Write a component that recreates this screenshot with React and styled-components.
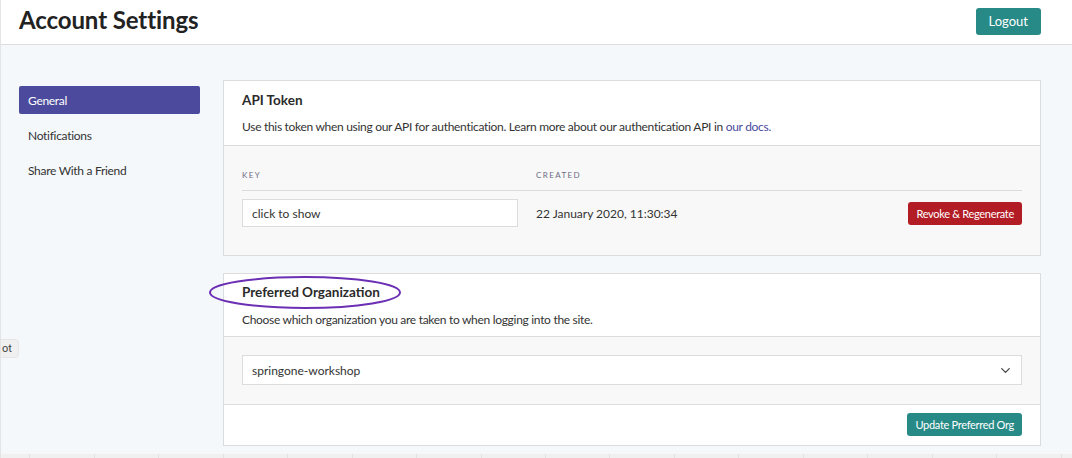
import React from 'react'
import styled, { createGlobalStyle } from 'styled-components'
import { ChevronDown } from 'lucide-react'

const GlobalStyle = createGlobalStyle`
  html, body {
    margin: 0;
    padding: 0;
    background: #fff;
    font-family: 'Lato', 'Open Sans', sans-serif;
    color: #333;
  }
  * { box-sizing: border-box; }
`

const Page = styled.div`
  width: 1072px;
  height: 458px;
  display: flex;
  flex-direction: column;
  position: relative;
  overflow: hidden;
  border-left: 1px solid #e4e4e4;
`

const Header = styled.header`
  height: 45px;
  flex: none;
  display: flex;
  align-items: center;
  justify-content: space-between;
  padding: 0 31px 0 18px;
  background: #fff;
  border-bottom: 1px solid #dedede;
`

const Title = styled.h1`
  margin: 0;
  font-size: 24px;
  font-weight: 700;
  color: #222;
  letter-spacing: -0.1px;
  position: relative;
  top: -3px;
`

const Button = styled.button`
  border: none;
  border-radius: 3px;
  color: #fff;
  font-family: inherit;
  font-size: ${p => p.size || 11}px;
  letter-spacing: ${p => (p.size ? 0 : -0.3)}px;
  padding: 0 ${p => p.pad || 8}px;
  height: ${p => p.h || 23}px;
  background: ${p => (p.danger ? '#b21c25' : '#278a87')};
  cursor: pointer;
  position: relative;
  top: ${p => p.lift || 0}px;
`

const Body = styled.main`
  flex: 1;
  display: flex;
  background: #f5f8fb;
  padding: 35px 31px 0 18px;
  gap: 23px;
`

const Sidebar = styled.nav`
  width: 181px;
  flex: none;
  display: flex;
  flex-direction: column;
  padding-top: 6px;
`

const NavItem = styled.div`
  height: 28px;
  display: flex;
  align-items: center;
  padding-left: 9px;
  margin-bottom: 7px;
  font-size: 12px;
  letter-spacing: -0.3px;
  border-radius: 2px;
  color: ${p => (p.active ? '#fff' : '#333')};
  background: ${p => (p.active ? '#4b4a9c' : 'transparent')};
`

const Content = styled.div`
  flex: 1;
  display: flex;
  flex-direction: column;
  gap: 17px;
`

const Card = styled.section`
  background: #fff;
  border: 1px solid #dcdcdc;
  position: relative;
`

const CardHead = styled.div`
  padding: ${p => (p.tight ? '10px 18px 9px' : '11px 18px 11px')};
  border-bottom: 1px solid #dcdcdc;
`

const CardTitle = styled.h2`
  margin: 0 0 ${p => (p.tight ? 12 : 11)}px;
  font-size: 13.5px;
  font-weight: 700;
  color: #2a2a2a;
`

const Desc = styled.p`
  margin: 0;
  font-size: 12px;
  letter-spacing: -0.3px;
  color: #333;
  a { color: #4b4a9c; text-decoration: none; }
`

const CardBody = styled.div`
  background: #f8f8f8;
  padding: ${p => p.pad || '20px 18px 28px'};
  border-bottom: ${p => (p.divided ? '1px solid #dcdcdc' : 'none')};
`

const Grid = styled.div`
  display: grid;
  grid-template-columns: 294px 1fr auto;
  align-items: center;
`

const Label = styled.div`
  font-size: 8px;
  letter-spacing: 1.4px;
  color: #6b6b85;
  padding: 4px 0 10px;
  border-bottom: 1px solid #dcdcdc;
`

const Cell = styled.div`
  padding-top: 8px;
  font-size: 12px;
  color: #333;
  justify-self: ${p => (p.end ? 'end' : 'stretch')};
`

const Input = styled.div`
  width: 276px;
  height: 28px;
  border: 1px solid #dcdcdc;
  background: #fff;
  display: flex;
  align-items: center;
  padding-left: 9px;
  font-size: 12px;
  color: #333;
`

const Select = styled(Input)`
  width: 100%;
  height: 30px;
  justify-content: space-between;
  padding-right: 8px;
  svg { color: #444; }
`

const CardFoot = styled.div`
  display: flex;
  justify-content: flex-end;
  padding: 8px 18px 9px;
`

const Ellipse = styled.svg`
  position: absolute;
  left: -15px;
  top: 2px;
  overflow: visible;
  pointer-events: none;
`

const Tip = styled.div`
  position: absolute;
  left: -5px;
  top: 339px;
  height: 19px;
  padding: 0 6px 0 5px;
  display: flex;
  align-items: center;
  background: #f0f0f0;
  border: 1px solid #e6e6e6;
  border-radius: 4px;
  font-family: 'Roboto', sans-serif;
  font-size: 11px;
  color: #444;
`

const Strip = styled.div`
  height: 4px;
  flex: none;
  background: repeating-linear-gradient(90deg, #f0f0f0 0 28px, #e2e2e2 28px 29px, #f0f0f0 29px 64.5px);
`

export default function App() {
  return (
    <>
      <GlobalStyle />
      <Page>
        <Header>
          <Title>Account Settings</Title>
          <Button size={13} h={27} pad={13} lift={-1}>Logout</Button>
        </Header>
        <Body>
          <Sidebar>
            <NavItem active>General</NavItem>
            <NavItem>Notifications</NavItem>
            <NavItem>Share With a Friend</NavItem>
          </Sidebar>
          <Content>
            <Card>
              <CardHead>
                <CardTitle>API Token</CardTitle>
                <Desc>
                  Use this token when using our API for authentication. Learn more about our authentication API in <a href="#">our docs.</a>
                </Desc>
              </CardHead>
              <CardBody>
                <Grid>
                  <Label>KEY</Label>
                  <Label>CREATED</Label>
                  <Label>&nbsp;</Label>
                  <Cell><Input>click to show</Input></Cell>
                  <Cell>22 January 2020, 11:30:34</Cell>
                  <Cell end="1"><Button danger>Revoke &amp; Regenerate</Button></Cell>
                </Grid>
              </CardBody>
            </Card>
            <Card>
              <CardHead tight>
                <CardTitle tight>Preferred Organization</CardTitle>
                <Desc>Choose which organization you are taken to when logging into the site.</Desc>
              </CardHead>
              <CardBody pad="18px 18px 19px" divided>
                <Select>
                  springone-workshop
                  <ChevronDown size={15} strokeWidth={2} />
                </Select>
              </CardBody>
              <CardFoot>
                <Button>Update Preferred Org</Button>
              </CardFoot>
              <Ellipse width="192" height="33">
                <ellipse cx="96" cy="16.5" rx="95" ry="15.5" fill="none" stroke="#6b2fb3" strokeWidth="2" />
              </Ellipse>
            </Card>
          </Content>
        </Body>
        <Strip />
        <Tip>ot</Tip>
      </Page>
    </>
  )
}
